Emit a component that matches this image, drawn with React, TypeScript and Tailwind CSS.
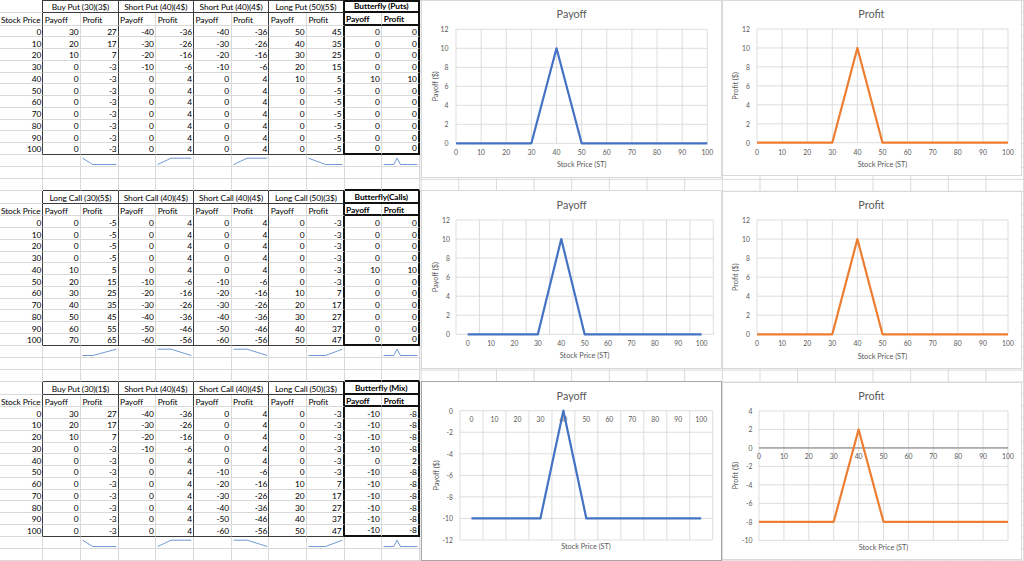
import React from 'react';
import clsx from 'clsx';

const prices = [0, 10, 20, 30, 40, 50, 60, 70, 80, 90, 100];
const rep = (n: number, v: number) => Array.from({ length: n }, () => v);

type Group = { name: string; payoff: number[]; profit: number[] };

const buyPut = { payoff: [30, 20, 10, ...rep(8, 0)], profit: [27, 17, 7, ...rep(8, -3)] };
const shortPut = { payoff: [-40, -30, -20, -10, ...rep(7, 0)], profit: [-36, -26, -16, -6, ...rep(7, 4)] };
const longPut = { payoff: [50, 40, 30, 20, 10, ...rep(6, 0)], profit: [45, 35, 25, 15, 5, ...rep(6, -5)] };
const fly = [0, 0, 0, 0, 10, 0, 0, 0, 0, 0, 0];
const longCall30 = { payoff: [0, 0, 0, 0, 10, 20, 30, 40, 50, 60, 70], profit: [-5, -5, -5, -5, 5, 15, 25, 35, 45, 55, 65] };
const shortCall = { payoff: [0, 0, 0, 0, 0, -10, -20, -30, -40, -50, -60], profit: [4, 4, 4, 4, 4, -6, -16, -26, -36, -46, -56] };
const longCall50 = { payoff: [0, 0, 0, 0, 0, 0, 10, 20, 30, 40, 50], profit: [-3, -3, -3, -3, -3, -3, 7, 17, 27, 37, 47] };
const mixPay = [-10, -10, -10, -10, 0, -10, -10, -10, -10, -10, -10];
const mixProf = [-8, -8, -8, -8, 2, -8, -8, -8, -8, -8, -8];

const table1: Group[] = [
  { name: 'Buy Put (30)(3$)', ...buyPut },
  { name: 'Short Put (40)(4$)', ...shortPut },
  { name: 'Short Put (40)(4$)', ...shortPut },
  { name: 'Long Put (50)(5$)', ...longPut },
  { name: 'Butterfly (Puts)', payoff: fly, profit: fly },
];
const table2: Group[] = [
  { name: 'Long Call (30)(5$)', ...longCall30 },
  { name: 'Short Call (40)(4$)', ...shortCall },
  { name: 'Short Call (40)(4$)', ...shortCall },
  { name: 'Long Call (50)(3$)', ...longCall50 },
  { name: 'Butterfly(Calls)', payoff: fly, profit: fly },
];
const table3: Group[] = [
  { name: 'Buy Put (30)(1$)', ...buyPut },
  { name: 'Short Put (40)(4$)', ...shortPut },
  { name: 'Short Call (40)(4$)', ...shortCall },
  { name: 'Long Call (50)(3$)', ...longCall50 },
  { name: 'Butterfly (Mix)', payoff: mixPay, profit: mixProf },
];

const LIGHT_R = 'border-r border-r-[#d9d9d9]';
const LIGHT_B = 'border-b border-b-[#d9d9d9]';
const groupRight = (g: number) => (g >= 3 ? 'border-r-2 border-r-[#111111]' : 'border-r border-r-[#3c3c3c]');
const darkB = (g: number) => (g === 4 ? 'border-b-2 border-b-[#111111]' : 'border-b border-b-[#3c3c3c]');
const darkT = (g: number) => (g === 4 ? 'border-t-2 border-t-[#111111]' : 'border-t border-t-[#3c3c3c]');
const base = 'flex shrink-0 items-end overflow-hidden whitespace-nowrap leading-none';

function Spark({ data }: { data: number[] }) {
  const min = Math.min(...data);
  const max = Math.max(...data);
  const pts = data.map((v, i) => `${1.6 + i * 3.37},${9.5 - ((v - min) / (max - min || 1)) * 6.3}`).join(' ');
  return (
    <svg width="37" height="12" className="block shrink-0">
      <polyline points={pts} fill="none" stroke="#4a7bc8" strokeWidth="0.8" />
    </svg>
  );
}

function SheetTable({ groups, first, last }: { groups: Group[]; first?: boolean; last?: boolean }) {
  return (
    <div className="flex flex-col">
      <div className="flex h-[12.8px]">
        <div className={clsx(base, 'w-[43.3px] border-r border-r-[#3c3c3c]', LIGHT_B)} />
        {groups.map((g, gi) => (
          <div
            key={gi}
            className={clsx(base, 'w-[75.34px] justify-center', groupRight(gi), darkB(gi), first && darkT(gi), gi === 4 && 'font-bold')}
          >
            {g.name}
          </div>
        ))}
      </div>
      <div className="flex h-[12.8px]">
        <div className={clsx(base, 'w-[43.3px] pl-[1px] border-r border-r-[#3c3c3c]', LIGHT_B)}>Stock Price</div>
        {groups.map((g, gi) => (
          <React.Fragment key={gi}>
            <div className={clsx(base, 'w-[37.67px] pl-[1.5px]', LIGHT_R, gi === 4 ? darkB(gi) : LIGHT_B, gi === 4 && 'font-bold')}>Payoff</div>
            <div className={clsx(base, 'w-[37.67px] pl-[1.5px]', groupRight(gi), gi === 4 ? darkB(gi) : LIGHT_B, gi === 4 && 'font-bold')}>Profit</div>
          </React.Fragment>
        ))}
      </div>
      {prices.map((p, ri) => {
        const lastRow = ri === 10;
        return (
          <div key={p} className="flex h-[11.75px]">
            <div className={clsx(base, 'w-[43.3px] justify-end pr-[1px] border-r border-r-[#3c3c3c]', LIGHT_B)}>{p}</div>
            {groups.map((g, gi) => (
              <React.Fragment key={gi}>
                <div className={clsx(base, 'w-[37.67px] justify-end pr-[1.5px]', LIGHT_R, lastRow ? darkB(gi) : LIGHT_B)}>{g.payoff[ri]}</div>
                <div className={clsx(base, 'w-[37.67px] justify-end pr-[1px]', groupRight(gi), lastRow ? darkB(gi) : LIGHT_B)}>{g.profit[ri]}</div>
              </React.Fragment>
            ))}
          </div>
        );
      })}
      <div className="flex h-[12.02px]">
        <div className={clsx(base, 'w-[43.3px]', LIGHT_R, LIGHT_B)} />
        {groups.map((g, gi) => (
          <React.Fragment key={gi}>
            <div className={clsx(base, 'w-[37.67px]', LIGHT_R, LIGHT_B)} />
            <div className={clsx(base, 'w-[37.67px] items-start', LIGHT_R, LIGHT_B)}>
              <Spark data={g.profit} />
            </div>
          </React.Fragment>
        ))}
      </div>
      <div className="flex h-[12.02px]">
        <div className={clsx(base, 'w-[43.3px]', LIGHT_R, LIGHT_B)} />
        {rep(10, 0).map((_, i) => (
          <div key={i} className={clsx(base, 'w-[37.67px]', LIGHT_R, LIGHT_B)} />
        ))}
      </div>
      <div className="flex h-[12.02px]">
        <div className={clsx(base, 'w-[43.3px]', LIGHT_R, LIGHT_B)} />
        {rep(10, 0).map((_, i) => (
          <div key={i} className={clsx(base, 'w-[37.67px]', LIGHT_R, last ? LIGHT_B : darkB(Math.floor(i / 2)))} />
        ))}
      </div>
    </div>
  );
}

type ChartCfg = {
  cls: string;
  w: number;
  h: number;
  title: string;
  yTitle: string;
  color: string;
  values: number[];
  yMin: number;
  yMax: number;
  mode: 'scatter' | 'cat';
  L: number;
  R: number;
  T: number;
  B: number;
  titleX: number;
  titleY: number;
  yLabelX: number;
  xLabelY: number;
  xTitleX: number;
  xTitleY: number;
  yTitleX: number;
  zeroAxis?: boolean;
};

function Chart({ c }: { c: ChartCfg }) {
  const yPx = (v: number) => c.T + ((c.yMax - v) / (c.yMax - c.yMin)) * (c.B - c.T);
  const cw = (c.R - c.L) / (c.mode === 'scatter' ? 10 : 11);
  const xPx = (i: number) => (c.mode === 'scatter' ? c.L + i * cw : c.L + (i + 0.5) * cw);
  const ticks: number[] = [];
  for (let v = c.yMin; v <= c.yMax; v += 2) ticks.push(v);
  const nLines = c.mode === 'scatter' ? 11 : 12;
  const vLines = Array.from({ length: nLines }, (_, i) => c.L + i * cw);
  const pts = c.values.map((v, i) => `${xPx(i)},${yPx(v)}`).join(' ');
  return (
    <div className={c.cls}>
      <svg width={c.w} height={c.h} className="block">
        {ticks.map((v) => (
          <line key={v} x1={c.L} x2={c.R} y1={yPx(v)} y2={yPx(v)} stroke="#d9d9d9" strokeWidth={0.9} />
        ))}
        {vLines.map((x, i) => (
          <line key={i} x1={x} x2={x} y1={c.T} y2={c.B} stroke="#d9d9d9" strokeWidth={0.9} />
        ))}
        {c.zeroAxis && <line x1={c.L} x2={c.R} y1={yPx(0)} y2={yPx(0)} stroke="#7a7a7a" strokeWidth={1} />}
        {ticks.map((v) => (
          <text key={v} x={c.yLabelX} y={yPx(v)} textAnchor="end" dominantBaseline="central" fontSize={6.8} fill="#595959">
            {v}
          </text>
        ))}
        {prices.map((p, i) => (
          <text key={p} x={xPx(i)} y={c.xLabelY} textAnchor="middle" dominantBaseline="central" fontSize={6.8} fill="#595959">
            {p}
          </text>
        ))}
        <polyline points={pts} fill="none" stroke={c.color} strokeWidth={2.2} strokeLinejoin="round" />
        <text x={c.titleX} y={c.titleY} textAnchor="middle" dominantBaseline="central" fontSize={10.8} fill="#595959">
          {c.title}
        </text>
        <text x={c.xTitleX} y={c.xTitleY} textAnchor="middle" dominantBaseline="central" fontSize={7.3} fill="#595959">
          Stock Price (ST)
        </text>
        <text
          transform={`translate(${c.yTitleX} ${(c.T + c.B) / 2}) rotate(-90)`}
          textAnchor="middle"
          dominantBaseline="central"
          fontSize={7.3}
          fill="#595959"
        >
          {c.yTitle}
        </text>
      </svg>
    </div>
  );
}

const BLUE = '#4472c4';
const ORANGE = '#ed7d31';

const charts: ChartCfg[] = [
  {
    cls: 'shrink-0 bg-white shadow-[inset_0_0_0_1px_#d9d9d9] w-[300.7px] h-[178.3px]',
    w: 300.7, h: 178.3, title: 'Payoff', yTitle: 'Payoff ($)', color: BLUE, values: fly, yMin: 0, yMax: 12, mode: 'scatter',
    L: 35, R: 286.3, T: 29.3, B: 143.3, titleX: 150.7, titleY: 13.5, yLabelX: 27.5, xLabelY: 152.3, xTitleX: 160.7, xTitleY: 164.3, yTitleX: 14.7,
  },
  {
    cls: 'shrink-0 ml-[0.6px] bg-white shadow-[inset_0_0_0_1px_#d9d9d9] w-[299.7px] h-[176px]',
    w: 299.7, h: 176, title: 'Profit', yTitle: 'Profit ($)', color: ORANGE, values: fly, yMin: 0, yMax: 12, mode: 'scatter',
    L: 35, R: 286, T: 29, B: 142.7, titleX: 149.4, titleY: 13, yLabelX: 28, xLabelY: 152, xTitleX: 160.5, xTitleY: 164, yTitleX: 13.4,
  },
  {
    cls: 'shrink-0 bg-white shadow-[inset_0_0_0_1px_#d9d9d9] w-[300.7px] h-[179px]',
    w: 300.7, h: 179, title: 'Payoff', yTitle: 'Payoff ($)', color: BLUE, values: fly, yMin: 0, yMax: 12, mode: 'cat',
    L: 35, R: 292.3, T: 30, B: 144.3, titleX: 150.7, titleY: 14, yLabelX: 29, xLabelY: 152.7, xTitleX: 163.6, xTitleY: 165.3, yTitleX: 14,
  },
  {
    cls: 'shrink-0 ml-[0.6px] mt-[1px] bg-white shadow-[inset_0_0_0_1px_#d9d9d9] w-[299.7px] h-[178px]',
    w: 299.7, h: 178, title: 'Profit', yTitle: 'Profit ($)', color: ORANGE, values: fly, yMin: 0, yMax: 12, mode: 'scatter',
    L: 35, R: 286, T: 29, B: 143.3, titleX: 149.4, titleY: 13, yLabelX: 28, xLabelY: 152.3, xTitleX: 160.5, xTitleY: 165.3, yTitleX: 13.4,
  },
  {
    cls: 'shrink-0 bg-white shadow-[inset_0_0_0_1px_#a6a6a6] w-[300.7px] h-[180px]',
    w: 300.7, h: 180, title: 'Payoff', yTitle: 'Payoff ($)', color: BLUE, values: mixPay, yMin: -12, yMax: 0, mode: 'cat',
    L: 39, R: 291.7, T: 29.7, B: 159, titleX: 150.7, titleY: 14, yLabelX: 32, xLabelY: 38.3, xTitleX: 165, xTitleY: 165, yTitleX: 15.7,
  },
  {
    cls: 'shrink-0 ml-[0.6px] mt-[0.7px] bg-white shadow-[inset_0_0_0_1px_#d9d9d9] w-[299.7px] h-[178px]',
    w: 299.7, h: 178, title: 'Profit', yTitle: 'Profit ($)', color: ORANGE, values: mixProf, yMin: -10, yMax: 4, mode: 'scatter',
    L: 37, R: 286, T: 29, B: 158.3, titleX: 149.4, titleY: 13.3, yLabelX: 30.4, xLabelY: 74.3, xTitleX: 161.5, xTitleY: 165, yTitleX: 13.4, zeroAxis: true,
  },
];

export default function App() {
  return (
    <div className="w-[1024px] h-[561px] overflow-hidden bg-white flex text-black [font-family:Lato,sans-serif] text-[8.4px] tracking-[-0.12px]">
      <div className="w-[420px] shrink-0 flex flex-col">
        <SheetTable groups={table1} first />
        <SheetTable groups={table2} />
        <SheetTable groups={table3} last />
      </div>
      <div className="flex-1 h-full overflow-hidden pl-[1px] flex flex-col tracking-normal bg-[linear-gradient(to_right,#d9d9d9_1px,transparent_1px),linear-gradient(to_bottom,#d9d9d9_1px,transparent_1px)] bg-[length:37.67px_11.93px] bg-[position:0.6px_0px]">
        <div className="flex items-start shrink-0">
          <Chart c={charts[0]} />
          <Chart c={charts[1]} />
        </div>
        <div className="flex items-start shrink-0 mt-[11.7px]">
          <Chart c={charts[2]} />
          <Chart c={charts[3]} />
        </div>
        <div className="flex items-start shrink-0 mt-[12px]">
          <Chart c={charts[4]} />
          <Chart c={charts[5]} />
        </div>
      </div>
    </div>
  );
}
